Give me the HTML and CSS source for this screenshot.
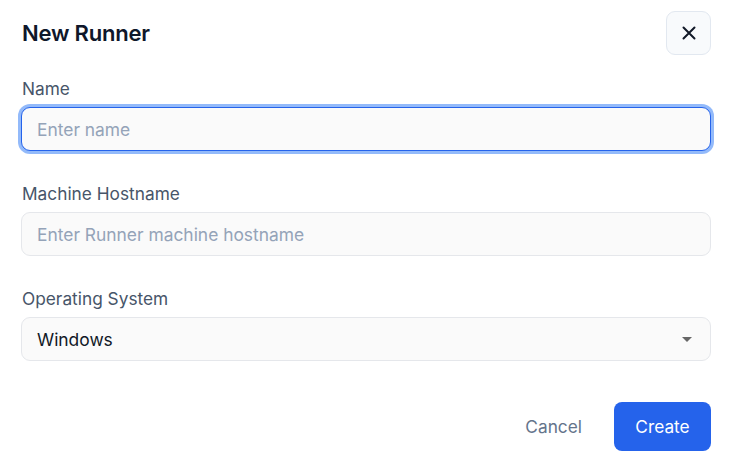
FILE: index.html
```html
<!DOCTYPE html>
<html lang="en">
<head>
<meta charset="utf-8">
<title>New Runner</title>
<link rel="stylesheet" href="styles.css">
</head>
<body>
<div class="dialog">
  <div class="header">
    <h1 class="title">New Runner</h1>
    <button class="close" type="button" aria-label="Close">
      <svg width="16" height="16" viewBox="0 0 16 16" fill="none" stroke="#111827" stroke-width="2" stroke-linecap="round"><path d="M2.5 2.5l11 11M13.5 2.5l-11 11"/></svg>
    </button>
  </div>
  <div class="fields">
    <div class="field">
      <label class="label">Name</label>
      <div class="input focused"><span class="placeholder">Enter name</span></div>
    </div>
    <div class="field">
      <label class="label">Machine Hostname</label>
      <div class="input"><span class="placeholder">Enter Runner machine hostname</span></div>
    </div>
    <div class="field">
      <label class="label">Operating System</label>
      <div class="input select"><span class="value">Windows</span><span class="caret"></span></div>
    </div>
  </div>
  <div class="actions">
    <button class="btn cancel" type="button">Cancel</button>
    <button class="btn create" type="button">Create</button>
  </div>
</div>
</body>
</html>
```
FILE: styles.css
```css
* { box-sizing: border-box; }
html, body { margin: 0; padding: 0; background: #ffffff; }
body { font-family: Inter, "Noto Sans", sans-serif; }
.dialog { padding: 11px 20px 0 21px; width: 731px; }
.header { display: flex; align-items: center; justify-content: space-between; height: 44px; }
.title { margin: 0; font-size: 22px; font-weight: 600; color: #0f172a; letter-spacing: -0.2px; padding-left: 1px; }
.close { width: 45px; height: 44px; border: 1px solid #e2e8f0; background: #f8fafc; border-radius: 9px; display: flex; align-items: center; justify-content: center; padding: 0; }
.fields { display: flex; flex-direction: column; gap: 33px; margin-top: 24px; }
.field { display: flex; flex-direction: column; gap: 8px; }
.label { font-size: 17.3px; line-height: 20px; color: #475569; padding-left: 1px; }
.input { height: 44px; border: 1px solid #e5e7eb; background: #fafafa; border-radius: 9px; display: flex; align-items: center; padding: 0 15px; font-size: 17.4px; }
.input.focused { border-color: #2563eb; box-shadow: 0 0 0 3px rgba(59,130,246,0.55); }
.placeholder { color: #94a3b8; }
.value { color: #111827; flex: 1; }
.select { justify-content: space-between; }
.caret { width: 0; height: 0; border-left: 5px solid transparent; border-right: 5px solid transparent; border-top: 5px solid #666666; margin-right: 3px; }
.actions { display: flex; justify-content: flex-end; gap: 12px; margin-top: 41px; }
.btn { font-family: inherit; font-size: 17.3px; height: 49px; padding: 0 20px; border: none; border-radius: 8px; cursor: pointer; }
.cancel { background: transparent; color: #64748b; }
.create { background: #2563eb; color: #ffffff; width: 97px; padding: 0; }
```
